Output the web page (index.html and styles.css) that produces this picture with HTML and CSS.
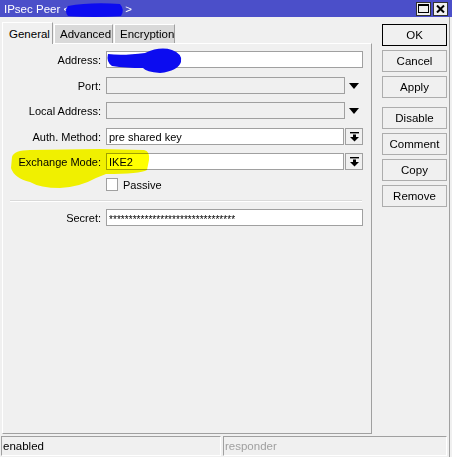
FILE: index.html
```html
<!DOCTYPE html>
<html>
<head>
<meta charset="utf-8">
<link rel="stylesheet" href="styles.css">
</head>
<body>
<div class="window">
  <div class="titlebar">
    <div class="title">IPsec Peer &lt;<span class="title-gap"></span>&gt;</div>
    <div class="winbtns">
      <div class="winbtn"><svg width="11" height="9" viewBox="0 0 11 9"><rect x="0.5" y="0.5" width="10" height="8" fill="none" stroke="#000"/><rect x="0" y="0" width="11" height="2" fill="#000"/></svg></div>
      <div class="winbtn"><svg width="9" height="8" viewBox="0 0 9 8"><path d="M1 0.5 L8 7.5 M8 0.5 L1 7.5" stroke="#000" stroke-width="2"/></svg></div>
    </div>
  </div>
  <div class="main">
    <div class="left">
      <div class="tabs">
        <div class="tab active">General</div>
        <div class="tab">Advanced</div>
        <div class="tab">Encryption</div>
      </div>
      <div class="panel">
        <div class="row r-address">
          <div class="label">Address:</div>
          <div class="field w-full"></div>
        </div>
        <div class="row r-port">
          <div class="label">Port:</div>
          <div class="field disabled w-short"></div>
          <div class="tri"></div>
        </div>
        <div class="row r-local">
          <div class="label">Local Address:</div>
          <div class="field disabled w-short"></div>
          <div class="tri"></div>
        </div>
        <div class="row r-auth">
          <div class="label">Auth. Method:</div>
          <div class="field w-combo">pre shared key</div>
          <div class="ddbtn"><svg width="9" height="10" viewBox="0 0 9 10"><rect x="0" y="0" width="9" height="1.4" fill="#000"/><rect x="3" y="2.5" width="3" height="2.5" fill="#000"/><polygon points="0,5 9,5 4.5,9.5" fill="#000"/></svg></div>
        </div>
        <div class="row r-exch">
          <div class="label">Exchange Mode:</div>
          <div class="field w-combo">IKE2</div>
          <div class="ddbtn"><svg width="9" height="10" viewBox="0 0 9 10"><rect x="0" y="0" width="9" height="1.4" fill="#000"/><rect x="3" y="2.5" width="3" height="2.5" fill="#000"/><polygon points="0,5 9,5 4.5,9.5" fill="#000"/></svg></div>
        </div>
        <div class="row r-passive">
          <div class="label"></div>
          <div class="check"></div>
          <div class="check-label">Passive</div>
        </div>
        <div class="sep"></div>
        <div class="row r-secret">
          <div class="label">Secret:</div>
          <div class="field w-full secret">********************************</div>
        </div>
      </div>
    </div>
    <div class="buttons">
      <div class="btn default">OK</div>
      <div class="btn">Cancel</div>
      <div class="btn">Apply</div>
      <div class="btn gap">Disable</div>
      <div class="btn">Comment</div>
      <div class="btn">Copy</div>
      <div class="btn">Remove</div>
    </div>
  </div>
  <div class="status">
    <div class="cell c-left">enabled</div>
    <div class="cell c-right">responder</div>
  </div>
</div>
<svg class="highlight" width="452" height="457" viewBox="0 0 452 457">
  <path d="M12 157 Q14 150 30 150 L100 149 L144 150 Q150 151 149 160 L147 170 Q140 174 106 174 L96 178 Q80 187 60 188 Q40 188 30 182 Q14 178 11 168 Z" fill="#ffff00"/>
</svg>
<svg class="scribble" width="452" height="457" viewBox="0 0 452 457">
  <path d="M68 6 Q90 2 120 4 Q125 10 121 16 Q95 18 68 16 Q64 11 68 6 Z" fill="#0c0cf0"/>
  <path d="M108 54 Q122 56 145 53 Q160 46 172 50 Q183 54 181 62 Q178 71 160 73 Q146 72 143 68 Q126 68 112 66 Q106 62 108 54 Z" fill="#0c0cf0"/>
</svg>
</body>
</html>
```

FILE: styles.css
```css
* { box-sizing: border-box; }
html, body { margin: 0; padding: 0; }
body {
  width: 452px;
  height: 457px;
  overflow: hidden;
  background: #f0f0f0;
  font-family: "Liberation Sans", Arial, sans-serif;
  font-size: 11px;
  color: #000;
  position: relative;
}
.window {
  width: 450px;
  height: 457px;
  border-right: 1px solid #a0a0a0;
  display: flex;
  flex-direction: column;
}
.titlebar {
  width: 452px;
  height: 17px;
  background: #4b4fc9;
  color: #fff;
  display: flex;
  align-items: center;
  justify-content: space-between;
  padding: 0 4px 0 4px;
  font-size: 11.5px;
}
.title { display: flex; align-items: center; }
.title-gap { display: inline-block; width: 55px; }
.winbtns { display: flex; gap: 2px; }
.winbtn {
  width: 15px;
  height: 14px;
  background: #f0f0f0;
  border: 1px solid #333;
  display: flex;
  align-items: center;
  justify-content: center;
}
.main { display: flex; padding-top: 5px; }
.left { margin-left: 2px; width: 370px; }
.tabs { display: flex; height: 21px; align-items: flex-end; }
.tab {
  height: 19px;
  background: #d9d9d9;
  border-top: 1px solid #fff;
  border-left: 1px solid #fff;
  border-right: 1px solid #a0a0a0;
  padding: 0 5px;
  display: flex;
  align-items: center;
  font-size: 11.5px;
  margin-left: 1px;
}
.tab.active {
  background: #f0f0f0;
  margin-left: 0;
  padding: 0 6px 0 6px;
  position: relative;
  z-index: 1;
  margin-bottom: -1px;
  height: 22px;
  width: 51px;
}
.tab:nth-child(2) { width: 59px; }
.tab:nth-child(3) { width: 61px; }
.panel {
  height: 391px;
  border-top: 1px solid #fff;
  border-left: 1px solid #fff;
  border-right: 1px solid #a0a0a0;
  border-bottom: 1px solid #a0a0a0;
  padding-top: 7px;
}
.row { display: flex; align-items: center; height: 17px; }
.r-port { margin-top: 9px; }
.r-local { margin-top: 8px; }
.r-auth { margin-top: 9px; }
.r-exch { margin-top: 8px; }
.r-passive { margin-top: 8px; height: 13px; }
.r-secret { margin-top: 7px; }
.label {
  width: 98px;
  margin-right: 5px;
  text-align: right;
  white-space: nowrap;
}
.field {
  height: 17px;
  background: #fff;
  border: 1px solid #a0a0a0;
  padding-left: 2px;
  display: flex;
  align-items: center;
  white-space: nowrap;
  overflow: hidden;
}
.field.disabled { background: #f0f0f0; }
.w-full { width: 257px; }
.w-short { width: 239px; }
.w-combo { width: 238px; }
.tri {
  margin-left: 4px;
  width: 0;
  height: 0;
  border-left: 5px solid transparent;
  border-right: 5px solid transparent;
  border-top: 6px solid #000;
}
.ddbtn {
  margin-left: 1px;
  width: 18px;
  height: 17px;
  border: 1px solid #a0a0a0;
  background: #f0f0f0;
  display: flex;
  align-items: center;
  justify-content: center;
}
.check {
  width: 12px;
  height: 13px;
  background: #fff;
  border: 1px solid #a0a0a0;
}
.check-label { margin-left: 5px; }
.sep {
  margin: 9px 0 0 7px;
  width: 352px;
  height: 2px;
  border-top: 1px solid #d9d9d9;
  border-bottom: 1px solid #fff;
}
.secret { font-size: 10px; letter-spacing: 0.05px; padding-top: 3px; }
.buttons {
  margin-left: 10px;
  padding-top: 2px;
  width: 65px;
  display: flex;
  flex-direction: column;
  gap: 4px;
}
.btn {
  height: 22px;
  border: 1px solid #adadad;
  background: #f0f0f0;
  display: flex;
  align-items: center;
  justify-content: center;
  font-size: 11.5px;
}
.btn.default { border: 1px solid #000; }
.btn.gap { margin-top: 5px; }
.status {
  display: flex;
  margin-top: 2px;
  padding-left: 1px;
  gap: 2px;
}
.cell {
  height: 20px;
  border-top: 1px solid #a0a0a0;
  border-left: 1px solid #a0a0a0;
  border-right: 1px solid #fff;
  border-bottom: 1px solid #fff;
  padding-left: 1px;
  display: flex;
  align-items: center;
  font-size: 11.5px;
}
.c-left { width: 220px; }
.c-right { width: 224px; color: #a0a0a0; }
.highlight {
  position: absolute;
  left: 0;
  top: 0;
  mix-blend-mode: multiply;
  pointer-events: none;
}
.scribble {
  position: absolute;
  left: 0;
  top: 0;
  pointer-events: none;
}
```
